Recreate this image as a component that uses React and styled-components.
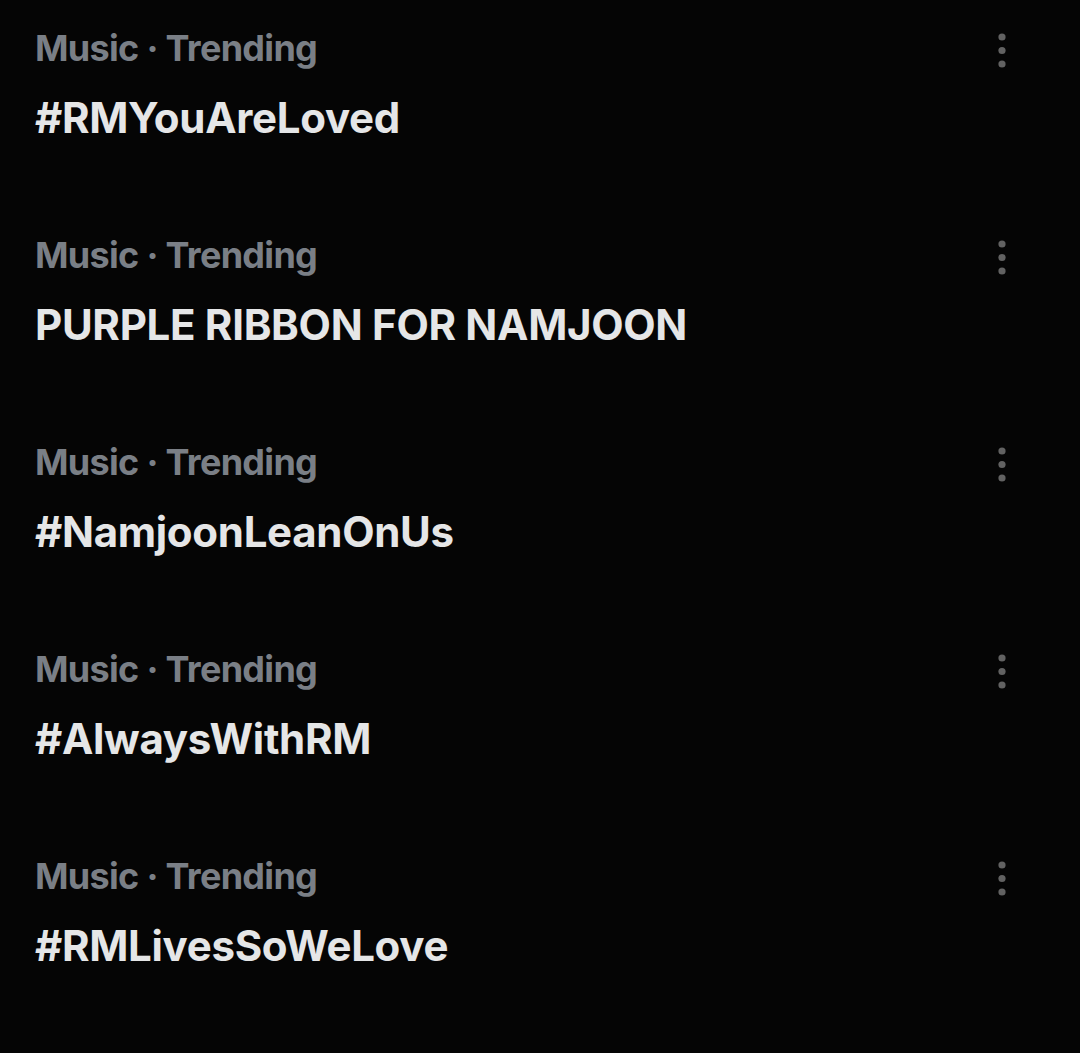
import styled, { createGlobalStyle } from "styled-components";

const trends = [
	{ id: 1, category: "Music · Trending", title: "#RMYouAreLoved" },
	{ id: 2, category: "Music · Trending", title: "PURPLE RIBBON FOR NAMJOON" },
	{ id: 3, category: "Music · Trending", title: "#NamjoonLeanOnUs" },
	{ id: 4, category: "Music · Trending", title: "#AlwaysWithRM" },
	{ id: 5, category: "Music · Trending", title: "#RMLivesSoWeLove" },
];

const MoreIcon = () => (
	<svg width="12" height="40" viewBox="0 0 12 40">
		<circle cx="6" cy="6" r="3.6" fill="currentColor" />
		<circle cx="6" cy="19.5" r="3.6" fill="currentColor" />
		<circle cx="6" cy="33" r="3.6" fill="currentColor" />
	</svg>
);

const App = () => {
	return (
		<>
			<GlobalStyle />
			<List>
				{trends.map((trend) => (
					<Row key={trend.id}>
						<Info>
							<Category>{trend.category}</Category>
							<Title>{trend.title}</Title>
						</Info>
						<MoreButton>
							<MoreIcon />
						</MoreButton>
					</Row>
				))}
			</List>
		</>
	);
};

export default App;

const GlobalStyle = createGlobalStyle`
	html, body {
		margin: 0;
		background: #050505;
	}
	body {
		font-family: Inter, "Noto Sans", sans-serif;
	}
`;

const List = styled.div`
	display: flex;
	flex-direction: column;
	min-height: 1053px;
	background: #050505;
`;

const Row = styled.div`
	display: flex;
	justify-content: space-between;
	align-items: flex-start;
	height: 207px;
	padding: 24px 72px 0 35px;
	box-sizing: border-box;
`;

const Info = styled.div`
	display: flex;
	flex-direction: column;
	gap: 22px;
`;

const Category = styled.div`
	color: #7a7f86;
	font-size: 36px;
	font-weight: 700;
	line-height: 48px;
	letter-spacing: -0.7px;
`;

const Title = styled.div`
	color: #e5e6e7;
	font-size: 42px;
	font-weight: 700;
	line-height: 48px;
	letter-spacing: -0.3px;
`;

const MoreButton = styled.div`
	color: #626262;
	display: flex;
	padding-top: 7px;
`;
